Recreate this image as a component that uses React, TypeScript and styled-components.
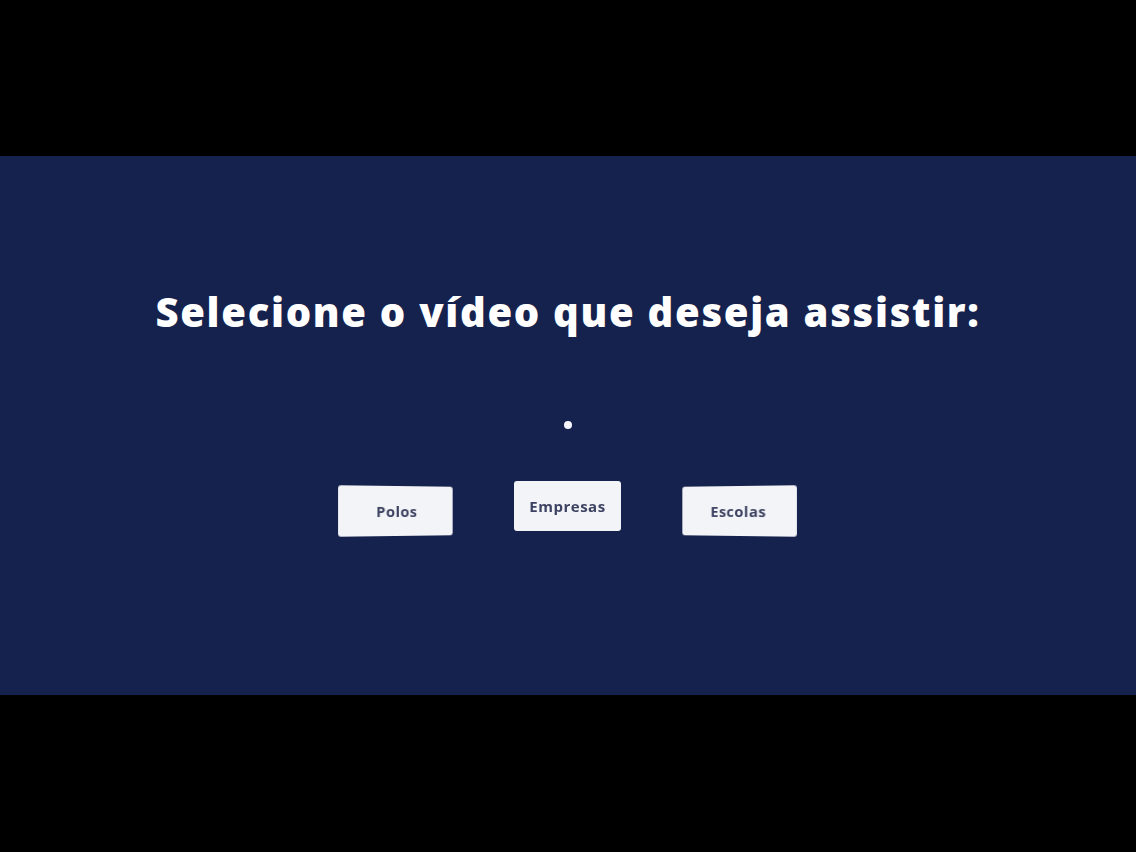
import React from "react";
import styled, { createGlobalStyle } from "styled-components";

const Global = createGlobalStyle`
  html, body { margin: 0; padding: 0; background: #000; }
  body { width: 1136px; height: 852px; overflow: hidden; }
`;

const Page = styled.div`
  width: 1136px;
  height: 852px;
  background: #000;
  display: flex;
  flex-direction: column;
  padding-top: 156px;
  box-sizing: border-box;
`;

const Banner = styled.div`
  height: 539px;
  background: #16224e;
  display: flex;
  flex-direction: column;
  align-items: center;
  box-sizing: border-box;
  padding-top: 128px;
`;

const Title = styled.h1`
  margin: 0;
  font-family: "Open Sans", "DejaVu Sans", sans-serif;
  font-weight: 800;
  font-size: 40px;
  line-height: 56px;
  color: #ffffff;
  letter-spacing: 1.7px;
`;

const Dot = styled.div`
  width: 8px;
  height: 8px;
  border-radius: 50%;
  background: #f4f6fb;
  margin-top: 81px;
  margin-left: -1px;
`;

const Buttons = styled.div`
  display: flex;
  gap: 58px;
  margin-top: 53px;
  align-items: center;
  margin-left: -2px;
`;

const Card = styled.button<{ $tilt: number; $w: number; $dy: number }>`
  width: ${(p) => p.$w}px;
  height: 50px;
  border: none;
  border-radius: 3px;
  background: #f3f4f7;
  color: #3d4262;
  font-family: "Open Sans", "DejaVu Sans", sans-serif;
  font-weight: 700;
  font-size: 15px;
  letter-spacing: 0.5px;
  display: flex;
  align-items: center;
  justify-content: center;
  cursor: pointer;
  transform: translateY(${(p) => p.$dy}px) perspective(500px) rotateY(${(p) => p.$tilt}deg);
`;

export default function App() {
  return (
    <>
      <Global />
      <Page>
        <Banner>
          <Title>Selecione o vídeo que deseja assistir:</Title>
          <Dot />
          <Buttons>
            <Card $tilt={14} $w={118} $dy={4}>Polos</Card>
            <Card $tilt={0} $w={107} $dy={-1}>Empresas</Card>
            <Card $tilt={-14} $w={118} $dy={4}>Escolas</Card>
          </Buttons>
        </Banner>
      </Page>
    </>
  );
}
